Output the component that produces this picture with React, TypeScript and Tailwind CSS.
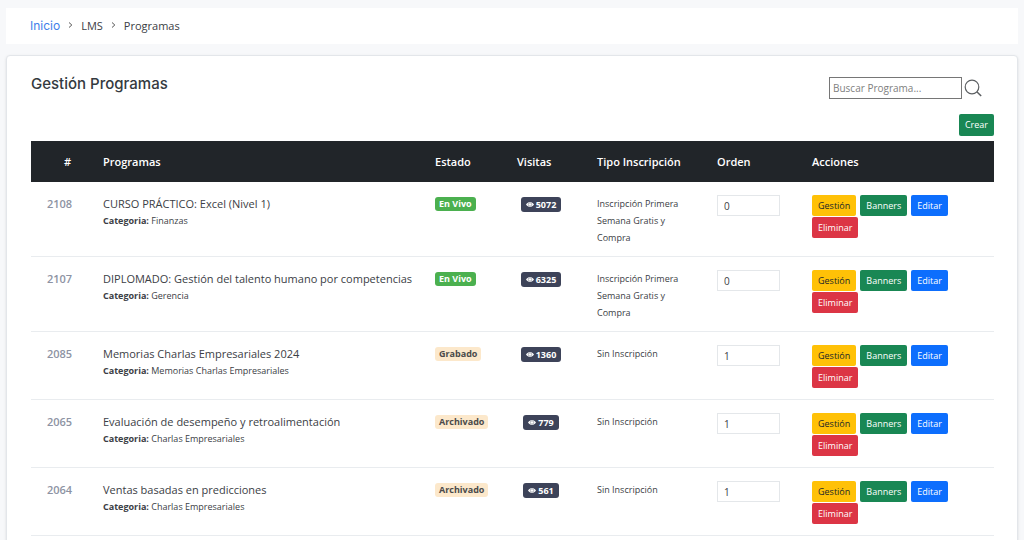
import { useState } from 'react';

type Program = {
  id: number;
  title: string;
  category: string;
  status: string;
  visits: number;
  enrollment: string;
  order: number;
};

const programs: Program[] = [
  { id: 2108, title: 'CURSO PRÁCTICO: Excel (Nivel 1)', category: 'Finanzas', status: 'En Vivo', visits: 5072, enrollment: 'Inscripción Primera Semana Gratis y Compra', order: 0 },
  { id: 2107, title: 'DIPLOMADO: Gestión del talento humano por competencias', category: 'Gerencia', status: 'En Vivo', visits: 6325, enrollment: 'Inscripción Primera Semana Gratis y Compra', order: 0 },
  { id: 2085, title: 'Memorias Charlas Empresariales 2024', category: 'Memorias Charlas Empresariales', status: 'Grabado', visits: 1360, enrollment: 'Sin Inscripción', order: 1 },
  { id: 2065, title: 'Evaluación de desempeño y retroalimentación', category: 'Charlas Empresariales', status: 'Archivado', visits: 779, enrollment: 'Sin Inscripción', order: 1 },
  { id: 2064, title: 'Ventas basadas en predicciones', category: 'Charlas Empresariales', status: 'Archivado', visits: 561, enrollment: 'Sin Inscripción', order: 1 },
];

const actions = [
  { label: 'Gestión', color: 'bg-[#ffc107] text-[#212529]' },
  { label: 'Banners', color: 'bg-[#198754] text-white' },
  { label: 'Editar', color: 'bg-[#0d6efd] text-white' },
  { label: 'Eliminar', color: 'bg-[#dc3545] text-white' },
];

function Chevron() {
  return (
    <svg aria-hidden="true" viewBox="0 0 5 6" className="w-[5px] h-[6px] mb-0.5" fill="none" stroke="#555" strokeWidth="1">
      <path d="M1 .5 3.8 3 1 5.5" />
    </svg>
  );
}

function Eye() {
  return (
    <svg aria-hidden="true" viewBox="0 0 16 10" className="w-2 h-[5px]">
      <path d="M0 5C2 2 5 .2 8 .2S14 2 16 5c-2 3-5 4.8-8 4.8S2 8 0 5Z" fill="#fff" />
      <circle cx="8" cy="5" r="3.4" fill="none" stroke="#3d4359" strokeWidth=".8" />
    </svg>
  );
}

export default function App() {
  const [search, setSearch] = useState('');
  const rows = programs.filter((p) => p.title.toLowerCase().includes(search.toLowerCase()));

  return (
    <div className="min-h-screen flex flex-col gap-[11px] bg-[#f7f8fa] px-1.5 pt-2 font-['Open_Sans',sans-serif] text-[#3b4045]">
      <nav aria-label="Breadcrumb" className="bg-white px-6 h-9 flex items-center text-[11px]">
        <ol className="flex items-center gap-2">
          <li><a href="#" className="text-[#3f80ea] text-[12px] font-['Inter',sans-serif]">Inicio</a></li>
          <li><Chevron /></li>
          <li>LMS</li>
          <li><Chevron /></li>
          <li>Programas</li>
        </ol>
      </nav>

      <main className="flex-1 bg-white rounded-sm border border-[#e3e6ea] shadow-sm pl-6 pr-[23px] pt-[18px] pb-6">
        <div className="flex justify-between items-start">
          <h1 className="text-[15px] leading-5 font-medium text-[#343a40] font-['Inter',sans-serif]">Gestión Programas</h1>
          <form className="flex items-center gap-0.5 pt-[3px] pr-3" onSubmit={(e) => e.preventDefault()}>
            <input
              type="text"
              aria-label="Buscar Programa"
              value={search}
              onChange={(e) => setSearch(e.target.value)}
              placeholder="Buscar Programa..."
              className="w-[133px] h-[22px] border border-[#767676] px-[3px] text-[10px] placeholder:text-[#808080] outline-none"
            />
            <button type="submit" aria-label="Buscar">
              <svg viewBox="0 0 18 18" className="w-[18px] h-[18px]" fill="none" stroke="#5c5f62" strokeWidth="1.2">
                <circle cx="8" cy="8" r="6.8" />
                <path d="m12.8 12.8 4.4 4.2" strokeWidth="1.5" />
              </svg>
            </button>
          </form>
        </div>

        <div className="flex justify-end pt-[15px] pb-[5px]">
          <button className="bg-[#198754] text-white text-[9px] h-[22px] px-1.5 rounded-xs">Crear</button>
        </div>

        <table className="w-full table-fixed text-left">
          <thead>
            <tr className="bg-[#212529] text-white text-[11px] h-[41px] [&>th]:px-4 [&>th]:pt-0.5 [&>th]:font-semibold [&>th]:whitespace-nowrap">
              <th className="w-[56px] text-right">#</th>
              <th>Programas</th>
              <th className="w-[82px]">Estado</th>
              <th className="w-[80px]">Visitas</th>
              <th className="w-[120px]">Tipo Inscripción</th>
              <th className="w-[95px]">Orden</th>
              <th className="w-[198px]">Acciones</th>
            </tr>
          </thead>
          <tbody>
            {rows.map((p) => (
              <tr key={p.id} className="h-[68px] border-b border-[#e9ecef] align-top text-[9px] leading-[17px] [&>td]:px-4 [&>td]:pt-[13px] [&>td]:pb-2.5">
                <td className="text-right text-[11px] font-semibold text-[#8d93a3]">{p.id}</td>
                <td>
                  <p className="text-[11px] leading-[17px] whitespace-nowrap">{p.title}</p>
                  <p><strong className="font-bold">Categoria:</strong> {p.category}</p>
                </td>
                <td>
                  <span className={`inline-block px-1 rounded-[3px] text-[9px] leading-[14px] font-bold ${
                    p.status === 'En Vivo' ? 'bg-[#4bb04f] text-white' : 'bg-[#fce8cb] text-[#4a4a4a]'
                  }`}>
                    {p.status}
                  </span>
                </td>
                <td className="text-center">
                  <span className="inline-flex items-center gap-0.5 px-[5px] rounded-[3px] bg-[#3d4359] text-white text-[9px] leading-[15px] font-bold">
                    <Eye /> {p.visits}
                  </span>
                </td>
                <td>{p.enrollment}</td>
                <td>
                  <input
                    type="text"
                    aria-label={`Orden ${p.id}`}
                    defaultValue={p.order}
                    className="block w-full h-[21px] px-1.5 border border-[#e4e7ea] text-[10px]"
                  />
                </td>
                <td>
                  <div className="flex flex-wrap gap-x-1 gap-y-px">
                    {actions.map((a) => (
                      <button key={a.label} className={`h-[21px] px-1.5 rounded-xs ${a.color}`}>{a.label}</button>
                    ))}
                  </div>
                </td>
              </tr>
            ))}
          </tbody>
        </table>
      </main>
    </div>
  );
}
